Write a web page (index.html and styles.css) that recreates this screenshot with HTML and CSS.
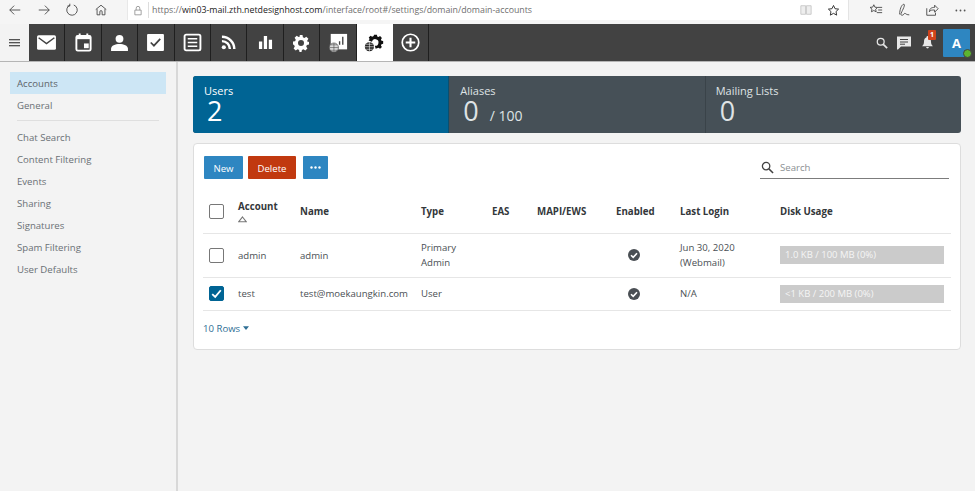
FILE: index.html
```html
<!DOCTYPE html>
<html lang="en">
<head>
<meta charset="utf-8">
<title>Domain Accounts</title>
<link rel="stylesheet" href="styles.css">
</head>
<body>
<header class="browser">
  <div class="nav-btns">
    <svg class="bi" viewBox="0 0 16 16"><path d="M14 8H2M7 3L2 8l5 5"/></svg>
    <svg class="bi" viewBox="0 0 16 16"><path d="M2 8h12M9 3l5 5-5 5"/></svg>
    <svg class="bi" viewBox="0 0 16 16"><path d="M5.500 2.500A6 6 0 1 0 10 2.300M5.500 0.800v2.700H2.800"/></svg>
    <svg class="bi" viewBox="0 0 16 16"><path d="M2 7.500L8 2.500l6 5M3.500 7v6.500h3.200V10a1.300 1.300 0 0 1 2.600 0v3.500h3.200V7"/></svg>
  </div>
  <div class="url">
    <svg class="lock" viewBox="0 0 12 14"><path d="M2 6.500h8v6H2zM3.700 6.500V4a2.300 2.300 0 0 1 4.600 0v2.500"/></svg>
    <span class="url-text">https://<b>win03-mail.zth.netdesignhost.com</b>/interface/root#/settings/domain/domain-accounts</span>
    <svg class="book" viewBox="0 0 14 14"><path d="M1 2h5.500v10H1zM7.500 2H13v10H7.500z"/></svg>
    <svg class="star" viewBox="0 0 16 16"><path d="M8 1.800l1.900 4 4.400.5-3.200 3 .8 4.400L8 11.500l-3.900 2.200.8-4.400-3.200-3 4.400-.5z"/></svg>
  </div>
  <div class="b-tools">
    <svg class="bi" viewBox="0 0 16 16"><path d="M5.500 2l1.300 2.800 3 .3-2.200 2 .6 3-2.700-1.500L2.800 10l.6-3-2.200-2 3-.3zM10 5h5M10.500 8H15M9 11h6"/></svg>
    <svg class="bi" viewBox="0 0 16 16"><path d="M3 13c0-5 2-11 4.500-11.500S7 7 5.500 10s-1.500 4 .5 4 2-3 3.500-2 2 1.500 4.500 1.500"/></svg>
    <svg class="bi" viewBox="0 0 16 16"><path d="M2 6v8h10v-3M5 10c0-4 3-5 6-5V2.500l4 4-4 4V8c-3 0-5 0-6 2z"/></svg>
    <svg class="more" viewBox="0 0 12 3"><circle cx="1.500" cy="1.500" r="1"/><circle cx="6" cy="1.500" r="1"/><circle cx="10.500" cy="1.500" r="1"/></svg>
  </div>
</header>

<nav class="appbar">
  <button class="burger" aria-label="Menu"><span></span><span></span><span></span></button>
  <div class="tabs">
    <a class="tab"><svg class="i-mail" viewBox="0 0 20 16"><rect x="1" y="1" width="18" height="14" rx="1.500" fill="#fff"/><path d="M2.500 3.500L10 9l7.500-5.500" fill="none" stroke="#424242" stroke-width="1.400"/></svg></a>
    <a class="tab"><svg viewBox="0 0 18 20"><path d="M4 .5h2v3H4zM12 .5h2v3h-2z" fill="#fff"/><rect x="1.500" y="3" width="15" height="15.500" rx="1.500" fill="none" stroke="#fff" stroke-width="2"/><rect x="1.500" y="3" width="15" height="3.500" fill="#fff"/><rect x="9.500" y="11" width="5" height="5" fill="#fff"/></svg></a>
    <a class="tab"><svg viewBox="0 0 18 16"><circle cx="9" cy="4.500" r="3.700" fill="#fff"/><path d="M1 16v-2c0-3 4-4.500 8-4.500s8 1.500 8 4.500v2z" fill="#fff"/></svg></a>
    <a class="tab"><svg viewBox="0 0 18 18"><rect x="1" y="1" width="16" height="16" rx="1" fill="#fff"/><path d="M4.500 9l3 3 6-6.500" fill="none" stroke="#424242" stroke-width="1.600"/></svg></a>
    <a class="tab"><svg viewBox="0 0 18 18"><rect x="1.500" y="1.500" width="15" height="15" rx="1.500" fill="none" stroke="#fff" stroke-width="1.800"/><path d="M4.500 5.500h9M4.500 9h9M4.500 12.500h9" stroke="#fff" stroke-width="1.500"/></svg></a>
    <a class="tab"><svg class="i-small" viewBox="0 0 16 16"><circle cx="3" cy="13" r="2.200" fill="#fff"/><path d="M1 6.500A8.500 8.500 0 0 1 9.500 15M1 1.800A13.200 13.200 0 0 1 14.200 15" fill="none" stroke="#fff" stroke-width="2.600"/></svg></a>
    <a class="tab"><svg class="i-small" viewBox="0 0 16 16"><path d="M1 7h3.500v8H1zM6.200 1h3.500v14H6.200zM11.500 5H15v10h-3.500z" fill="#fff"/></svg></a>
    <a class="tab"><svg class="i-gear" viewBox="0 0 18 18"><path fill-rule="evenodd" fill="#fff" d="M7.500 1h3l.4 2.200 1.500.7 1.900-1.200 2.100 2.100-1.200 1.900.7 1.500L17 7.600v3l-2.100.4-.7 1.500 1.200 1.900-2.100 2.100-1.900-1.200-1.500.7-.4 2H7.500l-.4-2-1.500-.7-1.900 1.200-2.100-2.100 1.200-1.900-.7-1.500L1 10.600v-3l2.100-.4.7-1.500-1.200-1.900 2.100-2.100 1.900 1.200 1.500-.7zM9 6a3 3 0 1 0 0 6 3 3 0 0 0 0-6z"/></svg></a>
    <a class="tab"><svg class="i-big" viewBox="0 0 22 22"><rect x="3" y="1" width="18" height="17" fill="#fff"/><path d="M12 13V9h1.500v4zM15.500 13V4H17v9z" fill="#424242"/><circle cx="6.500" cy="16" r="5" fill="#dcdcdc" stroke="#555" stroke-width=".8"/><path d="M1.500 16h10M6.500 11v10M3 13h7M3 19h7" stroke="#555" stroke-width=".7"/></svg></a>
    <a class="tab tab-on"><svg class="i-big" viewBox="0 0 24 22"><path fill-rule="evenodd" fill="#111" d="M12 1h3.500l.4 2.200 1.500.7 1.900-1.200 2.200 2.200-1.200 1.900.7 1.500 2 .4v3.300l-2 .4-.7 1.500 1.200 1.900-2.200 2.200-1.900-1.200-3.400 1-1-3.500a4 4 0 1 0-3.500-4.900L5.500 8l1.200-1.700-1-1.800 2.200-2.200 1.900 1.200 1.800-.8z"/><circle cx="6.500" cy="15.500" r="5.500" fill="#222"/><path d="M1 15.500h11M6.500 10v11M2.500 12.500h8M2.500 18.500h8" stroke="#fff" stroke-width=".7"/></svg></a>
    <a class="tab"><svg viewBox="0 0 20 20"><circle cx="10" cy="10" r="8.700" fill="none" stroke="#fff" stroke-width="1.800"/><path d="M10 5v10M5 10h10" stroke="#fff" stroke-width="2.200"/></svg></a>
  </div>
  <div class="app-right">
    <svg class="ic-search" viewBox="0 0 14 14"><circle cx="5.500" cy="5.500" r="4" fill="none" stroke="#e6e6e6" stroke-width="1.500"/><path d="M8.500 8.500L13 13" stroke="#e6e6e6" stroke-width="2"/></svg>
    <svg class="ic-chat" viewBox="0 0 14 14"><path d="M0 .5h14v10H4L1 13.500h-1z" fill="#e8e8e8"/><path d="M3 3.500h8M3 6h8M3 8.200h5" stroke="#424242" stroke-width="1"/></svg>
    <div class="bell">
      <svg viewBox="0 0 12 14"><path d="M6 0a1 1 0 0 1 1 1.200C9 2 9.800 3.500 9.800 6c0 3 1 4 2 5H.2c1-1 2-2 2-5 0-2.500.8-4 2.800-4.800A1 1 0 0 1 6 0zM4.500 12h3a1.500 1.500 0 0 1-3 0z" fill="#e8e8e8"/></svg>
      <span class="badge">1</span>
    </div>
    <div class="avatar">A<span class="dot"></span></div>
  </div>
</nav>

<div class="layout">
  <aside class="side">
    <a class="side-item active">Accounts</a>
    <a class="side-item">General</a>
    <hr class="side-sep">
    <a class="side-item">Chat Search</a>
    <a class="side-item">Content Filtering</a>
    <a class="side-item">Events</a>
    <a class="side-item">Sharing</a>
    <a class="side-item">Signatures</a>
    <a class="side-item">Spam Filtering</a>
    <a class="side-item">User Defaults</a>
  </aside>

  <main class="main">
    <section class="stats">
      <div class="stat stat-on"><div class="stat-label">Users</div><div class="stat-num">2</div></div>
      <div class="stat"><div class="stat-label">Aliases</div><div class="stat-num">0<small>/ 100</small></div></div>
      <div class="stat stat-last"><div class="stat-label">Mailing Lists</div><div class="stat-num">0</div></div>
    </section>

    <section class="card">
      <div class="actions">
        <button class="btn btn-blue">New</button>
        <button class="btn btn-red">Delete</button>
        <button class="btn btn-blue btn-dots" aria-label="More"><svg viewBox="0 0 11 3"><circle cx="1.500" cy="1.500" r="1.200"/><circle cx="5.500" cy="1.500" r="1.200"/><circle cx="9.500" cy="1.500" r="1.200"/></svg></button>
        <label class="search">
          <svg viewBox="0 0 14 14"><circle cx="5.500" cy="5.500" r="4" fill="none" stroke="#424242" stroke-width="1.400"/><path d="M8.500 8.500L13 13" stroke="#424242" stroke-width="1.600"/></svg>
          <span>Search</span>
        </label>
      </div>

      <table class="grid">
        <thead>
          <tr class="head">
            <th class="c-check"><span class="check"></span></th>
            <th class="c-acct">Account<svg class="sort" viewBox="0 0 8 6"><path d="M4 .8L7.300 5H.7z"/></svg></th>
            <th class="c-name">Name</th>
            <th class="c-type">Type</th>
            <th class="c-eas">EAS</th>
            <th class="c-mapi">MAPI/EWS</th>
            <th class="c-en">Enabled</th>
            <th class="c-login">Last Login</th>
            <th class="c-disk">Disk Usage</th>
          </tr>
        </thead>
        <tbody>
          <tr class="row-a">
            <td><span class="check"></span></td>
            <td>admin</td>
            <td>admin</td>
            <td>Primary<br>Admin</td>
            <td></td>
            <td></td>
            <td class="center"><svg class="ok" viewBox="0 0 12 12"><circle cx="6" cy="6" r="6" fill="#4a4f54"/><path d="M3 6.200l2.200 2.200L9 4.300" fill="none" stroke="#fff" stroke-width="1.600"/></svg></td>
            <td>Jun 30, 2020<br>(Webmail)</td>
            <td><div class="meter">1.0 KB / 100 MB (0%)</div></td>
          </tr>
          <tr class="row-b">
            <td><span class="check checked"><svg viewBox="0 0 14 14"><path d="M3 7.500l2.800 2.700L11 4" fill="none" stroke="#fff" stroke-width="1.700"/></svg></span></td>
            <td>test</td>
            <td>test@moekaungkin.com</td>
            <td>User</td>
            <td></td>
            <td></td>
            <td class="center"><svg class="ok" viewBox="0 0 12 12"><circle cx="6" cy="6" r="6" fill="#4a4f54"/><path d="M3 6.200l2.200 2.200L9 4.300" fill="none" stroke="#fff" stroke-width="1.600"/></svg></td>
            <td>N/A</td>
            <td><div class="meter">&lt;1 KB / 200 MB (0%)</div></td>
          </tr>
        </tbody>
      </table>

      <div class="rows">10 Rows<svg viewBox="0 0 8 5"><path d="M0 0h8L4 5z"/></svg></div>
    </section>
  </main>
</div>
</body>
</html>
```

FILE: styles.css
```css
* { box-sizing: border-box; }
html, body { height: 100%; }
body {
  margin: 0;
  background: #f3f3f3;
  font-family: "Open Sans", "Noto Sans", sans-serif;
  font-size: 9.600px;
  color: #4a4f54;
  overflow: hidden;
  display: flex;
  flex-direction: column;
}

/* browser chrome */
.browser {
  height: 24px;
  display: flex;
  align-items: flex-start;
  background: #f5f5f5;
  flex: none;
}
.bi { width: 14px; height: 14px; fill: none; stroke: #444; stroke-width: 1; flex: none; }
.nav-btns { width: 127px; height: 20px; display: flex; align-items: center; gap: 14.500px; padding-left: 8px; }
.url {
  width: 722px;
  height: 20px;
  background: #fff;
  border-right: 1px solid #e4e4e4;
  border-left: 1px solid #e8e8e8;
  display: flex;
  align-items: center;
  padding-left: 5px;
}
.lock { width: 10px; height: 11px; fill: none; stroke: #8a8a8a; stroke-width: 1; margin-right: 5px; }
.url-text { flex: 1; font-size: 8.800px; color: #6f6f6f; white-space: nowrap; border-left: 1px solid #ddd; padding-left: 3px; line-height: 16px; }
.url-text b { font-weight: 400; color: #222; }
.book { width: 12px; height: 12px; fill: #eee; stroke: #c6c6c6; margin-right: 15px; }
.star { width: 13px; height: 13px; fill: none; stroke: #333; stroke-width: 1.200; margin-right: 8px; }
.b-tools { flex: 1; height: 20px; display: flex; align-items: center; gap: 14px; padding-left: 20px; }
.more { width: 11px; height: 3px; fill: #555; margin-left: 2px; }

/* app bar */
.appbar {
  height: 38px;
  display: flex;
  align-items: stretch;
  flex: none;
  background: linear-gradient(#f3f3f3 0 0) left / 29px 100% no-repeat, #424242;
  border-bottom: 1px solid #b5b5b5;
}
.burger {
  width: 29px;
  padding: 0 9px;
  border: 0;
  background: none;
  display: flex;
  flex-direction: column;
  justify-content: center;
  gap: 2px;
}
.burger span { display: block; height: 1px; background: #555; box-shadow: 0 .500px 0 #888; }
.tabs { display: flex; }
.tab {
  width: 36.400px;
  display: flex;
  align-items: center;
  justify-content: center;
  border-right: 1px solid #1f1f1f;
}
.tab svg { width: 19px; height: 19px; }
.tab .i-mail { width: 21px; }
.tab .i-small { width: 15px; height: 15px; }
.tab .i-gear { width: 18px; height: 18px; }
.tab .i-big { width: 20px; height: 20px; }
.tab-on { background: #fff; border-right-color: #fff; }
.app-right { margin-left: auto; display: flex; align-items: center; }
.ic-search { width: 12px; height: 12px; margin-right: 9px; }
.ic-chat { width: 14px; height: 14px; margin-right: 11px; }
.bell { position: relative; width: 11px; height: 13px; margin-right: 10px; }
.bell svg { width: 11px; height: 13px; display: block; }
.badge {
  position: absolute;
  left: 6px;
  top: -6px;
  width: 8px;
  height: 10px;
  background: #d0421b;
  color: #fff;
  font-size: 7px;
  font-weight: 700;
  line-height: 10px;
  text-align: center;
  border-radius: 1px;
}
.avatar {
  position: relative;
  width: 27px;
  height: 28px;
  margin-right: 5px;
  background: #2e86c1;
  color: #fff;
  font-size: 13px;
  font-weight: 700;
  display: flex;
  align-items: center;
  justify-content: center;
  border-radius: 1px;
}
.dot {
  position: absolute;
  right: -2px;
  bottom: -1px;
  width: 9px;
  height: 9px;
  background: #5cb531;
  border: 1px solid #424242;
  border-radius: 50%;
}

/* layout */
.layout { flex: 1; display: flex; min-height: 0; }
.side {
  width: 178px;
  flex: none;
  border-right: 2px solid #d8d8d8;
  padding: 10px 10px 0 10px;
}
.side-item {
  display: block;
  height: 22px;
  line-height: 23px;
  padding-left: 7px;
  color: #6a7075;
}
.side-item.active { background: #cde6f5; color: #5d6469; }
.side-sep { border: 0; border-top: 1px solid #dfdfdf; margin: 4px 7px 5px 7px; }

.main { flex: 1; padding: 14px 14px 0 15px; min-width: 0; }

.stats {
  display: flex;
  height: 57px;
  background: #465057;
  border-radius: 3px;
  overflow: hidden;
}
.stat {
  flex: 1;
  padding: 9px 11px 0;
  color: #dfe3e5;
  border-right: 1px solid #3a4349;
}
.stat-last { border-right: 0; }
.stat-last .stat-label { margin-left: -1px; }
.stat-on { background: #006494; color: #fff; border-right-color: #0b4f70; }
.stat-label { font-size: 11px; line-height: 12px; }
.stat-num { font-size: 27px; line-height: 27px; padding-left: 3px; }
.stat-num small { font-size: 14px; margin-left: 11px; }

.card {
  margin-top: 10px;
  height: 207px;
  background: #fff;
  border: 1px solid #dddddd;
  border-radius: 4px;
  padding: 12px 10px 0;
}
.actions { display: flex; align-items: flex-start; height: 34px; }
.btn {
  height: 23px;
  border: 0;
  border-radius: 1px;
  color: #fff;
  font: inherit;
  padding: 1px 0 0;
}
.btn-blue { background: #2e86c1; width: 39px; }
.btn-red { background: #c1390f; width: 48px; margin-left: 5px; }
.btn-dots { width: 25px; margin-left: 7px; padding: 0; display: flex; align-items: center; justify-content: center; }
.btn-dots svg { width: 11px; height: 3px; fill: #fff; display: block; }
.search {
  margin-left: auto;
  margin-right: 1px;
  width: 189px;
  height: 23px;
  border-bottom: 1px solid #7c7c7c;
  display: flex;
  align-items: center;
  gap: 6px;
  padding: 1px 0 0 1px;
  color: #8b8f92;
}
.search svg { width: 13px; height: 13px; }

.grid { width: 748px; margin-left: -1px; border-collapse: collapse; table-layout: fixed; }
.grid th, .grid td { padding: 0; text-align: left; vertical-align: middle; font-weight: 400; }
.grid tr { border-bottom: 1px solid #e6e6e6; }
.grid th { color: #33373a; font-weight: 700; font-size: 9.700px; }
.head { height: 43px; }
.row-a { height: 44px; line-height: 15px; }
.row-b { height: 33px; }
.c-check { width: 35px; padding-left: 6px !important; }
.c-acct { width: 62px; line-height: 13px; }
.c-name { width: 121px; }
.c-type { width: 71px; }
.c-eas { width: 45px; }
.c-mapi { width: 79px; }
.c-en { width: 64px; }
.c-login { width: 100px; }
.c-disk { width: 171px; }
.center { padding-left: 12px !important; }
.check {
  display: block;
  width: 14.500px;
  height: 15px;
  margin-left: 6px;
  border: 1.500px solid #777;
  border-radius: 2px;
  background: #fff;
}
.c-check .check { margin-left: 0; }
.check.checked { background: #006494; border-color: #006494; position: relative; }
.check svg { position: absolute; left: -1.500px; top: -1.500px; width: 15px; height: 15px; }
.sort { display: block; width: 9px; height: 7px; margin-top: 3px; fill: none; stroke: #777; }
.ok { display: block; width: 12px; height: 12px; }
.meter {
  width: 164px;
  height: 18px;
  line-height: 18px;
  background: #cbcbcb;
  color: #f5f5f5;
  font-size: 9.500px;
  padding-left: 5px;
}
.rows { margin-top: 11px; margin-left: -1px; color: #2f6f95; display: flex; align-items: center; gap: 3px; }
.rows svg { width: 6px; height: 4px; fill: #2f6f95; }
```
